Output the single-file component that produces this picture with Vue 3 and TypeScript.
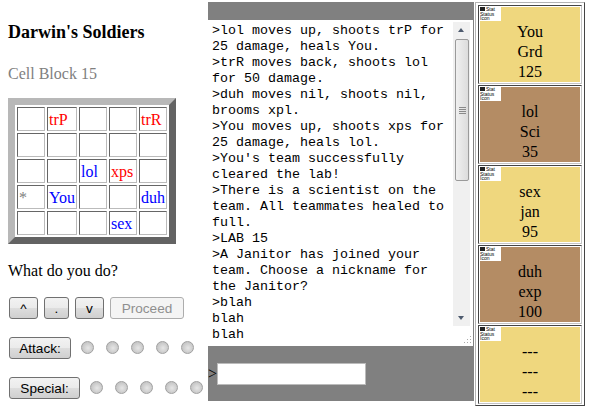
<template>
  <div class="page">
    <section class="side">
      <h1>Darwin's Soldiers</h1>
      <p class="level">Cell Block 15</p>
      <table class="grid">
        <tbody>
          <tr v-for="(row, r) in board" :key="r">
            <td v-for="(cell, c) in row" :key="c" :class="cell.team">{{ cell.text }}</td>
          </tr>
        </tbody>
      </table>
      <p class="prompt">What do you do?</p>
      <div class="controls">
        <button class="move">^</button>
        <button class="stay">.</button>
        <button class="move">v</button>
        <button class="proceed" disabled>Proceed</button>
      </div>
      <div class="controls action">
        <button class="attack">Attack:</button>
        <span class="radios"><i v-for="n in 5" :key="n" class="radio"></i></span>
      </div>
      <div class="controls action">
        <button class="special">Special:</button>
        <span class="radios"><i v-for="n in 5" :key="n" class="radio"></i></span>
      </div>
    </section>

    <section class="console">
      <div class="log">
        <div class="log-text">
          <div v-for="(line, i) in lines" :key="i">{{ line }}</div>
        </div>
        <div class="scrollbar">
          <span class="arrow up"></span>
          <span class="thumb"><b></b></span>
          <span class="arrow down"></span>
        </div>
        <svg class="grip" width="11" height="11" viewBox="0 0 11 11">
          <path d="M9 2h1v1H9zM6 5h1v1H6zM9 5h1v1H9zM3 8h1v1H3zM6 8h1v1H6zM9 8h1v1H9z" fill="#aaa" />
        </svg>
      </div>
      <div class="entry">
        <span>&gt;</span>
        <input type="text" />
      </div>
    </section>

    <table class="team">
      <tbody>
        <tr v-for="(m, i) in members" :key="i">
          <td>
            <div class="card" :class="m.kind">
              <span class="broken"><u></u>Stat<br />Status<br />Icon</span>
              <div>{{ m.name }}</div>
              <div>{{ m.role }}</div>
              <div>{{ m.hp }}</div>
            </div>
          </td>
        </tr>
      </tbody>
    </table>
  </div>
</template>

<script setup lang="ts">
type Cell = { text: string; team: string }

const layout = [
  ['', 'r:trP', '', '', 'r:trR'],
  ['', '', '', '', ''],
  ['', '', 'b:lol', 'r:xps', ''],
  ['g:*', 'b:You', '', '', 'b:duh'],
  ['', '', '', 'b:sex', ''],
]

const teamNames: Record<string, string> = { r: 'enemy', b: 'ally', g: 'mark' }

const board: Cell[][] = layout.map((row) =>
  row.map((c) => {
    if (!c) return { text: '\u00a0', team: '' }
    const [t, text] = c.split(':')
    return { text, team: teamNames[t] }
  })
)

const lines = [
  '>lol moves up, shoots trP for',
  '25 damage, heals You.',
  '>trR moves back, shoots lol',
  'for 50 damage.',
  '>duh moves nil, shoots nil,',
  'brooms xpl.',
  '>You moves up, shoots xps for',
  '25 damage, heals lol.',
  ">You's team successfully",
  'cleared the lab!',
  '>There is a scientist on the',
  'team. All teammates healed to',
  'full.',
  '>LAB 15',
  '>A Janitor has joined your',
  'team. Choose a nickname for',
  'the Janitor?',
  '>blah',
  'blah',
  'blah',
]

const members = [
  { name: 'You', role: 'Grd', hp: '125', kind: 'light' },
  { name: 'lol', role: 'Sci', hp: '35', kind: 'dark' },
  { name: 'sex', role: 'jan', hp: '95', kind: 'light' },
  { name: 'duh', role: 'exp', hp: '100', kind: 'dark' },
  { name: '---', role: '---', hp: '---', kind: 'light' },
]
</script>

<style>
html,
body {
  margin: 0;
  background: #fff;
}
</style>

<style scoped>
.page {
  display: flex;
  align-items: flex-start;
  width: 601px;
  height: 417px;
  overflow: hidden;
  font-family: 'Liberation Serif', serif;
  font-size: 16px;
  color: #000;
}

.side {
  width: 200px;
  padding: 23px 0 0 8px;
  flex: none;
}

h1 {
  margin: 0;
  font-size: 18px;
  line-height: 18px;
}

.level {
  margin: 24px 0 0;
  color: #808080;
  line-height: 18px;
}

.grid {
  margin-top: 15px;
  width: 168px;
  height: 146px;
  border-width: 7px;
  border-style: solid;
  border-color: #b8b8b8 #636363 #636363 #b8b8b8;
  border-spacing: 2px;
  box-sizing: border-box;
  table-layout: fixed;
}

.grid td {
  width: 28px;
  box-sizing: border-box;
  border: 1px solid;
  border-color: #666 #bbb #bbb #666;
  padding: 2px 0 0 1px;
  line-height: 20px;
  white-space: nowrap;
}

.grid td:nth-child(2) {
  width: 30px;
}

.enemy {
  color: #f00;
}

.ally {
  color: #00f;
}

.mark {
  color: #808080;
}

.prompt {
  margin: 18px 0 0;
  line-height: 18px;
}

.controls {
  display: flex;
  gap: 6px;
  margin: 17px 0 0 1px;
  align-items: center;
}

.action {
  gap: 10px;
  margin-top: 18px;
}

button {
  height: 22px;
  padding: 0;
  font-family: 'Liberation Sans', sans-serif;
  font-size: 13.6px;
  color: #000;
  border: 1px solid #707070;
  border-radius: 3px;
  background: linear-gradient(#f2f2f2 0%, #ebebeb 48%, #dddddd 52%, #cfcfcf 100%);
}

.move {
  width: 29px;
}

.stay {
  width: 25px;
}

.attack {
  width: 62px;
}

.special {
  width: 71px;
}

.proceed {
  width: 74px;
  color: #8f8f8f;
  border-color: #adadad;
  background: #f4f4f4;
}

.radios {
  display: flex;
  gap: 12px;
  margin-top: -2px;
}

.radio {
  width: 13px;
  height: 13px;
  box-sizing: border-box;
  border-radius: 50%;
  border: 1px solid #a0a0a0;
  background: radial-gradient(circle at 55% 55%, #e6e6e6, #c0c0c0 80%);
}

.console {
  flex: none;
  width: 266px;
  height: 399px;
  margin-top: 2px;
  background: #808080;
  display: flex;
  flex-direction: column;
}

.log {
  position: relative;
  display: flex;
  height: 326px;
  margin: 18px 1px 0 0;
  background: #fff;
  box-sizing: border-box;
  overflow: hidden;
}

.log-text {
  flex: 1;
  padding: 3px 0 0 4px;
  font-family: 'Liberation Mono', monospace;
  font-size: 13.33px;
  line-height: 16px;
  white-space: pre;
}

.scrollbar {
  display: flex;
  flex-direction: column;
  width: 17px;
  height: 304px;
  margin: 2px 3px 0 0;
  background: #f0f0f0;
}

.arrow {
  height: 17px;
  flex: none;
  position: relative;
}

.arrow::after {
  content: '';
  position: absolute;
  left: 5px;
  border-left: 3.5px solid transparent;
  border-right: 3.5px solid transparent;
}

.arrow.up::after {
  top: 6px;
  border-bottom: 4px solid #4d5a6e;
}

.arrow.down::after {
  top: 7px;
  border-top: 4px solid #4d5a6e;
}

.thumb {
  height: 142px;
  flex: none;
  margin: 0 1px auto 2px;
  border: 1px solid #9a9a9a;
  border-radius: 2px;
  background: linear-gradient(90deg, #f0f0f0, #dcdcdc);
  box-sizing: border-box;
  display: flex;
  align-items: center;
  justify-content: center;
}

.thumb b {
  width: 7px;
  height: 7px;
  background: repeating-linear-gradient(#8a8a8a 0 1px, transparent 1px 2px);
}

.grip {
  position: absolute;
  right: 1px;
  bottom: 1px;
}

.entry {
  display: flex;
  align-items: center;
  flex: 1;
  padding-top: 1px;
}

.entry span {
  width: 9px;
}

.entry input {
  width: 149px;
  height: 22px;
  box-sizing: border-box;
  border: 1px solid #bbb;
  padding: 0;
  background: #fff;
}

.team {
  margin: 2px 0 0 1px;
  width: 110px;
  height: 404px;
  flex: none;
  border: 1px solid;
  border-color: #b4b4b4 #444 #444 #b4b4b4;
  padding-top: 1px;
  border-spacing: 2px 1px;
  box-sizing: border-box;
}

.team td {
  padding: 1px;
  border: 1px solid;
  border-color: #444 #c4c4c4 #c4c4c4 #444;
  background: #fff;
}

.card {
  position: relative;
  height: 75px;
  box-sizing: border-box;
  padding-top: 15px;
  text-align: center;
  line-height: 20px;
}

.card.light {
  background: #efd77e;
}

.card.dark {
  background: #b48c64;
}

.broken {
  position: absolute;
  top: 0;
  left: 0;
  width: 21px;
  height: 14px;
  background: #fff;
  font-family: 'Liberation Sans', sans-serif;
  font-size: 5px;
  line-height: 4.5px;
  text-align: left;
  overflow: hidden;
}

.broken u {
  display: inline-block;
  width: 5px;
  height: 4px;
  margin-right: 1px;
  background: #222;
}
</style>
